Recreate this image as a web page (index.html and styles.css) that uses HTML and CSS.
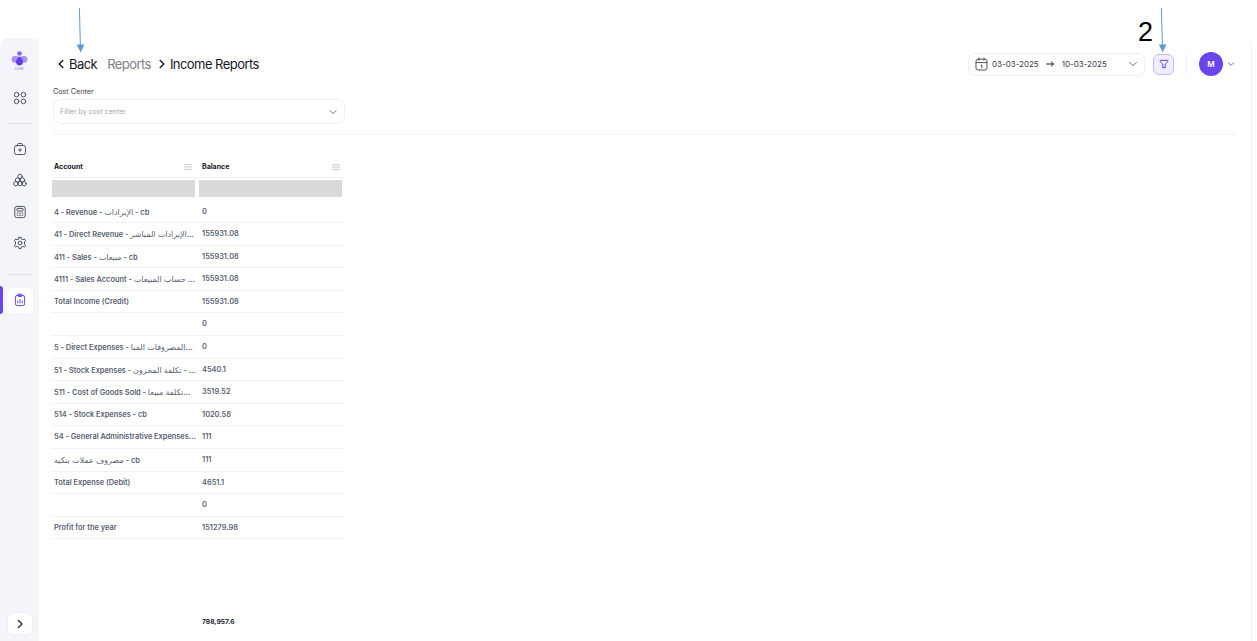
FILE: index.html
```html
<!DOCTYPE html>
<html lang="en">
<head>
<meta charset="utf-8">
<title>Income Reports</title>
<link rel="stylesheet" href="styles.css">
</head>
<body>
<div class="frame">
  <aside class="sidebar">
    <div class="logo">
      <svg width="17" height="17" viewBox="0 0 18 17">
        <ellipse cx="4.6" cy="9.5" rx="4" ry="3.6" fill="#a78ff5"/>
        <ellipse cx="13.4" cy="9.5" rx="4" ry="3.6" fill="#a78ff5"/>
        <circle cx="9" cy="3.2" r="2.5" fill="#8468ee"/>
        <path d="M9 6.2C11.4 8.4 12.6 10.3 12.6 12.3A3.6 3.6 0 0 1 5.4 12.3C5.4 10.3 6.6 8.4 9 6.2Z" fill="#5f3de8"/>
      </svg>
      <span class="logo-text">CARE</span>
    </div>
    <div class="side-item">
      <svg class="ico" viewBox="0 0 14 14"><circle cx="3.6" cy="3.6" r="2.3"/><circle cx="10.4" cy="3.6" r="2.3"/><circle cx="3.6" cy="10.4" r="2.3"/><circle cx="10.4" cy="10.4" r="2.3"/></svg>
    </div>
    <div class="side-divider"></div>
    <div class="side-item">
      <svg class="ico" viewBox="0 0 14 14"><rect x="1.5" y="3.6" width="11" height="8.9" rx="2"/><path d="M4.6 3.6V2.8A1.4 1.4 0 0 1 6 1.4H8A1.4 1.4 0 0 1 9.4 2.8V3.6"/><path d="M7 6.6V9.4M5.6 8H8.4"/></svg>
    </div>
    <div class="side-item">
      <svg class="ico" viewBox="0 0 14 14"><circle cx="7" cy="3.4" r="2.2"/><circle cx="4.6" cy="7" r="2.2"/><circle cx="9.4" cy="7" r="2.2"/><circle cx="2.9" cy="10.6" r="2.2"/><circle cx="7" cy="10.6" r="2.2"/><circle cx="11.1" cy="10.6" r="2.2"/></svg>
    </div>
    <div class="side-item">
      <svg class="ico" viewBox="0 0 14 14"><rect x="1.8" y="1.4" width="10.4" height="11.2" rx="1.8"/><rect x="4" y="3.4" width="6" height="2.6" rx=".5"/><path d="M4.2 8H5M6.6 8H7.4M9 8H9.8M4.2 10.2H5M6.6 10.2H7.4M9 10.2H9.8"/></svg>
    </div>
    <div class="side-item">
      <svg class="ico" viewBox="0 0 14 14"><circle cx="7" cy="7" r="1.9"/><path d="M6 1.4H8L8.4 3L9.9 3.7L11.4 2.9L12.6 4.6L11.5 5.9V8.1L12.6 9.4L11.4 11.1L9.9 10.3L8.4 11L8 12.6H6L5.6 11L4.1 10.3L2.6 11.1L1.4 9.4L2.5 8.1V5.9L1.4 4.6L2.6 2.9L4.1 3.7L5.6 3Z"/></svg>
    </div>
    <div class="side-divider side-divider-low"></div>
    <div class="side-active">
      <span class="active-bar"></span>
      <span class="active-card">
        <svg class="ico ico-active" viewBox="0 0 14 14"><rect x="2.4" y="2.4" width="9.2" height="10.2" rx="1.8"/><rect x="5" y="1.2" width="4" height="2.4" rx=".8"/><path d="M4.8 10V8M7 10V6.4M9.2 10V8"/></svg>
      </span>
    </div>
    <button class="expand" type="button">
      <svg width="10" height="10" viewBox="0 0 10 10"><path d="M3.4 1.4L7 5L3.4 8.6" fill="none" stroke="#2b2d38" stroke-width="1.4" stroke-linecap="round" stroke-linejoin="round"/></svg>
    </button>
  </aside>

  <main class="main">
    <header class="topbar">
      <nav class="crumbs">
        <svg class="crumb-chev crumb-chev-back" width="10" height="12" viewBox="0 0 10 12"><path d="M6.8 2.4L3.2 6L6.8 9.6"/></svg>
        <span class="crumb-back">Back</span>
        <span class="crumb-muted">Reports</span>
        <svg class="crumb-chev" width="10" height="12" viewBox="0 0 10 12"><path d="M3.2 2.4L6.8 6L3.2 9.6"/></svg>
        <span class="crumb-current">Income Reports</span>
      </nav>
      <div class="tools">
        <div class="datepicker">
          <svg width="13" height="14" viewBox="0 0 13 14" class="cal"><rect x="1" y="2.2" width="11" height="10.8" rx="2"/><path d="M1 5.6H12M4 1V3.2M9 1V3.2M6 8.2L6.8 7.8V11"/></svg>
          <span class="date">03-03-2025</span>
          <svg class="date-arrow" width="10" height="8" viewBox="0 0 10 8"><path d="M1 4H8.6M6 1.6L8.6 4L6 6.4"/></svg>
          <span class="date">10-03-2025</span>
          <svg class="chev date-chev" width="10" height="10" viewBox="0 0 10 10"><path d="M1.6 3.4L5 6.8L8.4 3.4"/></svg>
        </div>
        <button class="filter-btn" type="button">
          <svg width="10" height="10" viewBox="0 0 10 10"><path d="M1.2 1.4H8.8V2.6L6.2 5.2V8.6H3.8V5.2L1.2 2.6Z" fill="none" stroke="#6a45ec" stroke-width="1" stroke-linejoin="round"/></svg>
        </button>
        <span class="tool-sep"></span>
        <span class="avatar">M</span>
        <svg class="chev user-chev" width="8" height="8" viewBox="0 0 8 8"><path d="M1.4 2.8L4 5.4L6.6 2.8"/></svg>
      </div>
    </header>

    <section class="filters">
      <label class="field-label">Cost Center</label>
      <div class="select">
        <span class="placeholder">Filter by cost center</span>
        <svg class="chev" width="10" height="10" viewBox="0 0 10 10"><path d="M2 3.6L5 6.6L8 3.6"/></svg>
      </div>
    </section>

    <section class="report">
      <div class="row row-head">
        <div class="cell head-cell"><span>Account</span><svg class="menu" width="8" height="6" viewBox="0 0 8 6"><path d="M0 .7H8M0 3H8M0 5.3H8"/></svg></div>
        <div class="cell head-cell"><span>Balance</span><svg class="menu" width="8" height="6" viewBox="0 0 8 6"><path d="M0 .7H8M0 3H8M0 5.3H8"/></svg></div>
      </div>
      <div class="row row-filter">
        <div class="filter-box"></div>
        <div class="filter-box"></div>
      </div>
      <div class="row"><div class="cell">4 - Revenue - <span class="ar">الإيرادات</span> - cb</div><div class="cell">0</div></div>
      <div class="row"><div class="cell">41 - Direct Revenue - <span class="ar">الإيرادات المباشر</span>…</div><div class="cell">155931.08</div></div>
      <div class="row"><div class="cell">411 - Sales - <span class="ar">مبيعات</span> - cb</div><div class="cell">155931.08</div></div>
      <div class="row"><div class="cell">4111 - Sales Account - <span class="ar">حساب المبيعات</span> …</div><div class="cell">155931.08</div></div>
      <div class="row"><div class="cell">Total Income (Credit)</div><div class="cell">155931.08</div></div>
      <div class="row"><div class="cell"></div><div class="cell">0</div></div>
      <div class="row"><div class="cell">5 - Direct Expenses - <span class="ar">المصروفات المبا</span>…</div><div class="cell">0</div></div>
      <div class="row"><div class="cell">51 - Stock Expenses - <span class="ar">تكلفة المخزون</span> - …</div><div class="cell">4540.1</div></div>
      <div class="row"><div class="cell">511 - Cost of Goods Sold - <span class="ar">تكلفة مبيعا</span>…</div><div class="cell">3519.52</div></div>
      <div class="row"><div class="cell">514 - Stock Expenses - cb</div><div class="cell">1020.58</div></div>
      <div class="row"><div class="cell">54 - General Administrative Expenses…</div><div class="cell">111</div></div>
      <div class="row"><div class="cell"><span class="ar">مصروف عملات بنكية</span> - cb</div><div class="cell">111</div></div>
      <div class="row"><div class="cell">Total Expense (Debit)</div><div class="cell">4651.1</div></div>
      <div class="row"><div class="cell"></div><div class="cell">0</div></div>
      <div class="row"><div class="cell">Profit for the year</div><div class="cell">151279.98</div></div>
      <div class="row row-total"><div class="cell"></div><div class="cell total">788,957.6</div></div>
    </section>
  </main>
</div>

<svg class="annotations" width="1257" height="60" viewBox="0 0 1257 60">
  <path d="M79.4 8L80.4 46" stroke="#5b9bd5" stroke-width="1"/>
  <path d="M76.7 44.5H84.4L80.7 52.5Z" fill="#5b9bd5"/>
  <path d="M1161.4 8L1162.4 46" stroke="#5b9bd5" stroke-width="1"/>
  <path d="M1158.8 44.5H1166.5L1162.7 52.5Z" fill="#5b9bd5"/>
</svg>
<span class="note-number">2</span>
</body>
</html>
```

FILE: styles.css
```css
* { box-sizing: border-box; }

html, body {
  margin: 0;
  height: 100%;
  overflow: hidden;
  background: #fff;
}

body {
  padding: 38px 5px 0 0;
  font-family: Inter, "DejaVu Sans", sans-serif;
  color: #17181f;
}

.frame {
  display: flex;
  height: 603px;
  border-radius: 8px 8px 0 0;
  border-right: 1px solid #f0f1f4;
  overflow: hidden;
}

/* sidebar */
.sidebar {
  width: 39px;
  flex: none;
  background: #f4f5fa;
  display: flex;
  flex-direction: column;
  align-items: center;
}

.logo {
  display: flex;
  flex-direction: column;
  align-items: center;
  margin-top: 12px;
  height: 21px;
}

.logo svg { display: block; }

.logo-text {
  font-size: 3.5px;
  line-height: 4px;
  color: #8a70ee;
}

.side-item {
  height: 31.3px;
  width: 39px;
  display: flex;
  align-items: center;
  justify-content: center;
}

.logo + .side-item { margin-top: 11px; }

.ico {
  width: 14px;
  height: 14px;
  fill: none;
  stroke: #4f5263;
  stroke-width: 1;
  stroke-linecap: round;
  stroke-linejoin: round;
}

.ico-active { stroke: #6a45ec; }

.side-divider {
  width: 24px;
  height: 1px;
  background: #dfe1e8;
  margin: 10px 0 9px;
}

.side-divider-low { margin: 16px 0 11px; }

.side-active {
  width: 39px;
  height: 28px;
  display: flex;
  align-items: center;
}

.active-bar {
  width: 3px;
  height: 28px;
  background: #6a45ec;
  border-radius: 0 3px 3px 0;
}

.active-card {
  width: 26px;
  height: 25px;
  margin-left: 4px;
  background: #fff;
  border-radius: 5px;
  display: flex;
  align-items: center;
  justify-content: center;
}

.expand {
  margin-top: auto;
  margin-bottom: 6px;
  width: 26px;
  height: 23px;
  padding: 0;
  background: #fff;
  border: 1px solid #eceef3;
  border-radius: 7px;
  display: flex;
  align-items: center;
  justify-content: center;
}

/* main */
.main {
  flex: 1;
  min-width: 0;
  background: #fff;
  padding: 14px 15px 0 14px;
  display: flex;
  flex-direction: column;
}

.topbar {
  display: flex;
  align-items: center;
  justify-content: space-between;
  height: 24px;
}

.crumbs {
  display: flex;
  align-items: center;
  font-size: 13px;
  letter-spacing: -0.55px;
}

.crumb-chev {
  fill: none;
  stroke: #17181f;
  stroke-width: 1.4;
  stroke-linecap: round;
  stroke-linejoin: round;
}

.crumb-chev-back { margin-left: 3px; }
.crumb-back { margin: 0 10px 0 3px; }
.crumb-muted { color: #7d8087; margin-right: 6px; }
.crumb-current { margin-left: 3px; }

.tools {
  display: flex;
  align-items: center;
  margin-right: 1px;
}

.datepicker {
  width: 177px;
  height: 23px;
  border: 1px solid #eceef2;
  border-radius: 7px;
  display: flex;
  align-items: center;
  padding: 0 6px;
  margin-right: 8px;
}

.cal {
  fill: none;
  stroke: #4f5263;
  stroke-width: 1;
  stroke-linecap: round;
  margin-right: 4px;
}

.date {
  font-size: 8px;
  color: #3b3d4a;
}

.date-arrow {
  fill: none;
  stroke: #22232c;
  stroke-width: 1;
  margin: 0 6.5px;
}

.chev {
  fill: none;
  stroke: #6b6e7b;
  stroke-width: 1;
  stroke-linecap: round;
  stroke-linejoin: round;
}

.date-chev { margin-left: auto; }

.filter-btn {
  width: 21px;
  height: 21px;
  padding: 0;
  background: #f0edff;
  border: 1px solid #c4b8fb;
  border-radius: 6px;
  display: flex;
  align-items: center;
  justify-content: center;
  margin-right: 12px;
}

.tool-sep {
  width: 1px;
  height: 20px;
  background: #eceef2;
  margin-right: 12px;
}

.avatar {
  width: 24px;
  height: 24px;
  border-radius: 50%;
  background: #6a45ec;
  color: #fff;
  font-size: 8px;
  font-weight: 600;
  display: flex;
  align-items: center;
  justify-content: center;
  margin-right: 4px;
}

.filters {
  margin-top: 10px;
  padding-bottom: 10px;
  border-bottom: 1px solid #eff0f3;
}

.field-label {
  display: block;
  font-size: 7.2px;
  line-height: 11px;
  color: #3b3d4a;
  margin-bottom: 2px;
}

.select {
  width: 292px;
  height: 25px;
  border: 1px solid #eceef2;
  border-radius: 8px;
  display: flex;
  align-items: center;
  justify-content: space-between;
  padding: 0 6px;
}

.placeholder {
  font-size: 7px;
  color: #a3a7b3;
}

/* report table */
.report {
  margin: 20px 0 0 -2px;
  width: 293px;
  flex: 1;
  display: flex;
  flex-direction: column;
}

.row {
  display: grid;
  grid-template-columns: 148px 145px;
  height: 22.6px;
  flex: none;
  border-bottom: 1px solid #eef1f5;
}

.row-head {
  height: 23px;
  padding-top: 1px;
  border-bottom: 1px solid #f0f1f4;
}

.row-filter {
  height: 22.5px;
  border-bottom: 0;
  padding: 2px 1px 3.5px;
  grid-template-columns: 143px 143px;
  column-gap: 4px;
}

.filter-box { background: #d9d9d9; }

.cell {
  font-size: 7.4px;
  font-weight: 600;
  color: #5a5f73;
  padding: 0 3px;
  line-height: 22px;
  white-space: nowrap;
  overflow: hidden;
  text-overflow: ellipsis;
}

.ar { font-weight: 400; font-size: 8px; }

.head-cell {
  display: flex;
  align-items: center;
  justify-content: space-between;
  padding-right: 7px;
  color: #17181f;
  font-size: 7px;
  font-weight: 700;
}

.head-cell:last-child { padding-right: 4px; }

.menu {
  stroke: #c9cbd2;
  stroke-width: 1;
}

.row-total {
  margin-top: auto;
  margin-bottom: 7.5px;
  border-bottom: 0;
}

.total {
  color: #22232c;
  font-size: 6.7px;
  font-weight: 700;
}

/* annotations drawn over the screenshot */
.annotations {
  position: absolute;
  top: 0;
  left: 0;
  pointer-events: none;
}

.note-number {
  position: absolute;
  left: 1138px;
  top: 15px;
  font-family: "Liberation Sans", sans-serif;
  font-size: 27px;
  line-height: 34px;
  color: #000;
}
```
